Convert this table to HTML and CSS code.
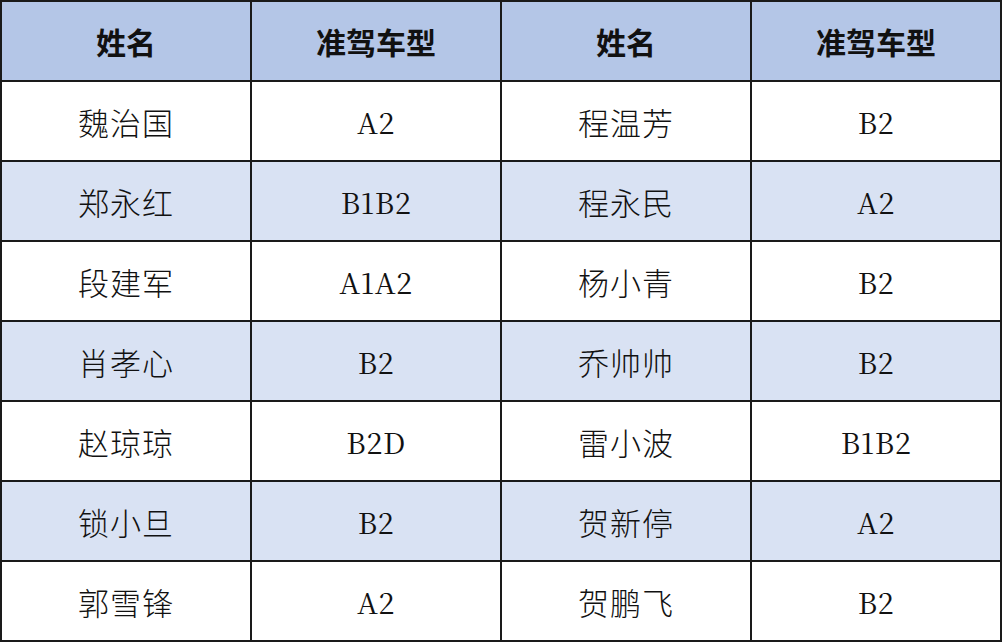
FILE: index.html
```html
<!DOCTYPE html>
<html lang="zh">
<head>
<meta charset="utf-8">
<link rel="stylesheet" href="styles.css">
</head>
<body>
<table class="roster">
  <thead>
    <tr><th>姓名</th><th>准驾车型</th><th>姓名</th><th>准驾车型</th></tr>
  </thead>
  <tbody>
    <tr><td class="name">魏治国</td><td class="code">A2</td><td class="name">程温芳</td><td class="code">B2</td></tr>
    <tr class="alt"><td class="name">郑永红</td><td class="code">B1B2</td><td class="name">程永民</td><td class="code">A2</td></tr>
    <tr><td class="name">段建军</td><td class="code">A1A2</td><td class="name">杨小青</td><td class="code">B2</td></tr>
    <tr class="alt"><td class="name">肖孝心</td><td class="code">B2</td><td class="name">乔帅帅</td><td class="code">B2</td></tr>
    <tr><td class="name">赵琼琼</td><td class="code">B2D</td><td class="name">雷小波</td><td class="code">B1B2</td></tr>
    <tr class="alt"><td class="name">锁小旦</td><td class="code">B2</td><td class="name">贺新停</td><td class="code">A2</td></tr>
    <tr><td class="name">郭雪锋</td><td class="code">A2</td><td class="name">贺鹏飞</td><td class="code">B2</td></tr>
  </tbody>
</table>
</body>
</html>
```
FILE: styles.css
```css
html, body {
  margin: 0;
  padding: 0;
  background: #ffffff;
}

.roster {
  width: 1002px;
  height: 642px;
  border-collapse: collapse;
  table-layout: fixed;
  border: 2px solid #1a1a1a;
  font-family: "Noto Sans CJK SC", "Noto Sans", sans-serif;
  color: #111111;
}

.roster th,
.roster td {
  border: 2px solid #1a1a1a;
  text-align: center;
  vertical-align: middle;
  padding: 0;
  height: 78px;
  line-height: 1;
}

.roster th {
  background: #b4c6e7;
  font-size: 30px;
  font-weight: 700;
}

.roster td {
  background: #ffffff;
}

.roster tr.alt td {
  background: #d9e2f3;
}

.roster td.name {
  font-size: 31px;
  font-weight: 300;
  letter-spacing: 1px;
  font-family: "Noto Sans CJK SC", sans-serif;
}

.roster td.code {
  font-size: 29px;
  letter-spacing: 0.5px;
  font-family: "Noto Serif CJK SC", "Liberation Serif", serif;
}
```
